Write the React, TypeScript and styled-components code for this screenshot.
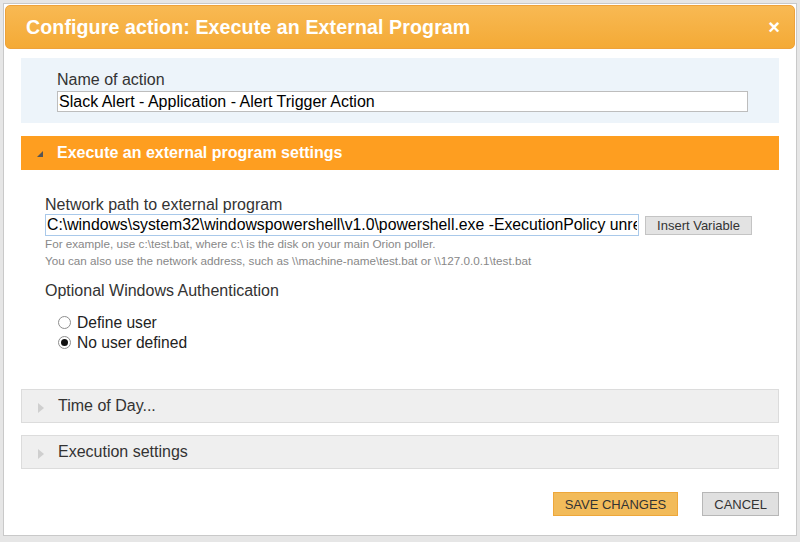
import styled, { createGlobalStyle } from "styled-components";

const GlobalStyle = createGlobalStyle`
  html, body {
    margin: 0;
    padding: 0;
    background: #e6e6e6;
    font-family: "Liberation Sans", Arial, sans-serif;
  }
`;

const App = () => {
  return (
    <>
      <GlobalStyle />
      <Dialog>
        <Header>
          <Title>Configure action: Execute an External Program</Title>
          <Close>×</Close>
        </Header>

        <Body>
          <NameBox>
            <Label>Name of action</Label>
            <NameInput defaultValue="Slack Alert - Application - Alert Trigger Action" />
          </NameBox>

          <SectionBar $open>
            <Arrow $open />
            <SectionTitle $open>Execute an external program settings</SectionTitle>
          </SectionBar>

          <Settings>
            <FieldLabel>Network path to external program</FieldLabel>
            <PathRow>
              <PathInput defaultValue="C:\windows\system32\windowspowershell\v1.0\powershell.exe -ExecutionPolicy unrestricted" />
              <SmallButton>Insert Variable</SmallButton>
            </PathRow>
            <Hint>For example, use c:\test.bat, where c:\ is the disk on your main Orion poller.</Hint>
            <Hint>You can also use the network address, such as \\machine-name\test.bat or \\127.0.0.1\test.bat</Hint>

            <AuthLabel>Optional Windows Authentication</AuthLabel>
            <RadioList>
              <RadioRow>
                <Radio />
                Define user
              </RadioRow>
              <RadioRow>
                <Radio $checked />
                No user defined
              </RadioRow>
            </RadioList>
          </Settings>

          <Collapsed>
            <SectionBar>
              <Arrow />
              <SectionTitle>Time of Day...</SectionTitle>
            </SectionBar>
            <SectionBar>
              <Arrow />
              <SectionTitle>Execution settings</SectionTitle>
            </SectionBar>
          </Collapsed>

          <Footer>
            <ActionButton $primary>SAVE CHANGES</ActionButton>
            <ActionButton>CANCEL</ActionButton>
          </Footer>
        </Body>
      </Dialog>
    </>
  );
};

export default App;

const Dialog = styled.div`
  margin: 3px 3px 0 3px;
  height: 533px;
  box-sizing: border-box;
  background: #fff;
  border: 1px solid #c9c9c9;
  padding: 1px 1px 0 1px;
  display: flex;
  flex-direction: column;
`;

const Header = styled.div`
  height: 44px;
  border-radius: 5px;
  background: linear-gradient(to bottom, #f8b953, #f4aa36);
  border: 1px solid #eea23a;
  box-sizing: border-box;
  display: flex;
  align-items: center;
  justify-content: space-between;
  padding: 0 14px 0 20px;
`;

const Title = styled.h1`
  margin: 0;
  font-size: 19.6px;
  font-weight: bold;
  color: #fff;
  letter-spacing: 0.1px;
`;

const Close = styled.span`
  color: #fff;
  font-size: 20px;
  font-weight: bold;
  line-height: 1;
`;

const Body = styled.div`
  padding: 9px 16px 0 16px;
  display: flex;
  flex-direction: column;
`;

const NameBox = styled.div`
  height: 65px;
  box-sizing: border-box;
  background: #edf4fa;
  padding: 12px 31px 0 36px;
  display: flex;
  flex-direction: column;
  gap: 2px;
`;

const Label = styled.label`
  font-size: 16px;
  color: #333;
  line-height: 19px;
`;

const NameInput = styled.input`
  height: 21px;
  box-sizing: border-box;
  border: 1px solid #bdbdbd;
  padding: 0 1px;
  font-family: inherit;
  font-size: 16px;
  color: #000;
  outline: none;
`;

const SectionBar = styled.div<{ $open?: boolean }>`
  height: 34px;
  box-sizing: border-box;
  display: flex;
  align-items: center;
  padding-left: 16px;
  gap: 14px;
  background: ${(p) => (p.$open ? "#fe9e20" : "#efefef")};
  border: ${(p) => (p.$open ? "none" : "1px solid #dcdcdc")};
  margin-top: ${(p) => (p.$open ? "13px" : "0")};
`;

const Arrow = styled.span<{ $open?: boolean }>`
  width: 0;
  height: 0;
  ${(p) =>
    p.$open
      ? `
    border-left: 6px solid transparent;
    border-bottom: 6px solid #555;
    margin-top: 2px;
  `
      : `
    border-top: 5px solid transparent;
    border-bottom: 5px solid transparent;
    border-left: 6px solid #cfcfcf;
    margin-top: 3px;
  `}
`;

const SectionTitle = styled.span<{ $open?: boolean }>`
  font-size: 16px;
  font-weight: ${(p) => (p.$open ? "bold" : "normal")};
  color: ${(p) => (p.$open ? "#fff" : "#333")};
`;

const Settings = styled.div`
  padding: 25px 0 0 24px;
  display: flex;
  flex-direction: column;
`;

const FieldLabel = styled.div`
  font-size: 16px;
  color: #333;
  line-height: 19px;
`;

const PathRow = styled.div`
  display: flex;
  align-items: center;
  gap: 6px;
`;

const PathInput = styled.input`
  width: 594px;
  height: 22px;
  box-sizing: border-box;
  border: 1px solid #a9c9ea;
  padding: 0 1px;
  font-family: inherit;
  font-size: 15.8px;
  color: #000;
  outline: none;
`;

const SmallButton = styled.button`
  width: 107px;
  height: 19px;
  box-sizing: border-box;
  background: #e3e3e3;
  border: 1px solid #c4c4c4;
  font-family: inherit;
  font-size: 13px;
  color: #333;
  padding: 0;
`;

const Hint = styled.div`
  font-size: 11.7px;
  color: #888;
  line-height: 16.5px;
  &:first-of-type {
    margin-top: 2px;
  }
`;

const AuthLabel = styled.div`
  font-size: 16px;
  color: #333;
  margin-top: 12px;
  line-height: 19px;
`;

const RadioList = styled.div`
  display: flex;
  flex-direction: column;
  padding: 13px 0 0 13px;
  gap: 1px;
`;

const RadioRow = styled.label`
  display: flex;
  align-items: center;
  gap: 6px;
  font-size: 15.6px;
  color: #222;
  line-height: 19px;
`;

const Radio = styled.span<{ $checked?: boolean }>`
  width: 13px;
  height: 13px;
  box-sizing: border-box;
  border-radius: 50%;
  border: 1px solid #8e8e8e;
  background: #fff;
  display: inline-flex;
  align-items: center;
  justify-content: center;
  &::after {
    content: "";
    width: 7px;
    height: 7px;
    border-radius: 50%;
    background: ${(p) => (p.$checked ? "#111" : "transparent")};
  }
`;

const Collapsed = styled.div`
  display: flex;
  flex-direction: column;
  gap: 12px;
  margin-top: 37px;
`;

const Footer = styled.div`
  display: flex;
  justify-content: flex-end;
  gap: 24px;
  margin-top: 23px;
`;

const ActionButton = styled.button<{ $primary?: boolean }>`
  height: 24px;
  box-sizing: border-box;
  padding: 0 11px;
  background: ${(p) => (p.$primary ? "#f2bb5a" : "#e0e0e0")};
  border: 1px solid ${(p) => (p.$primary ? "#eea73a" : "#b7b7b7")};
  font-family: inherit;
  font-size: 13px;
  color: #333;
`;
